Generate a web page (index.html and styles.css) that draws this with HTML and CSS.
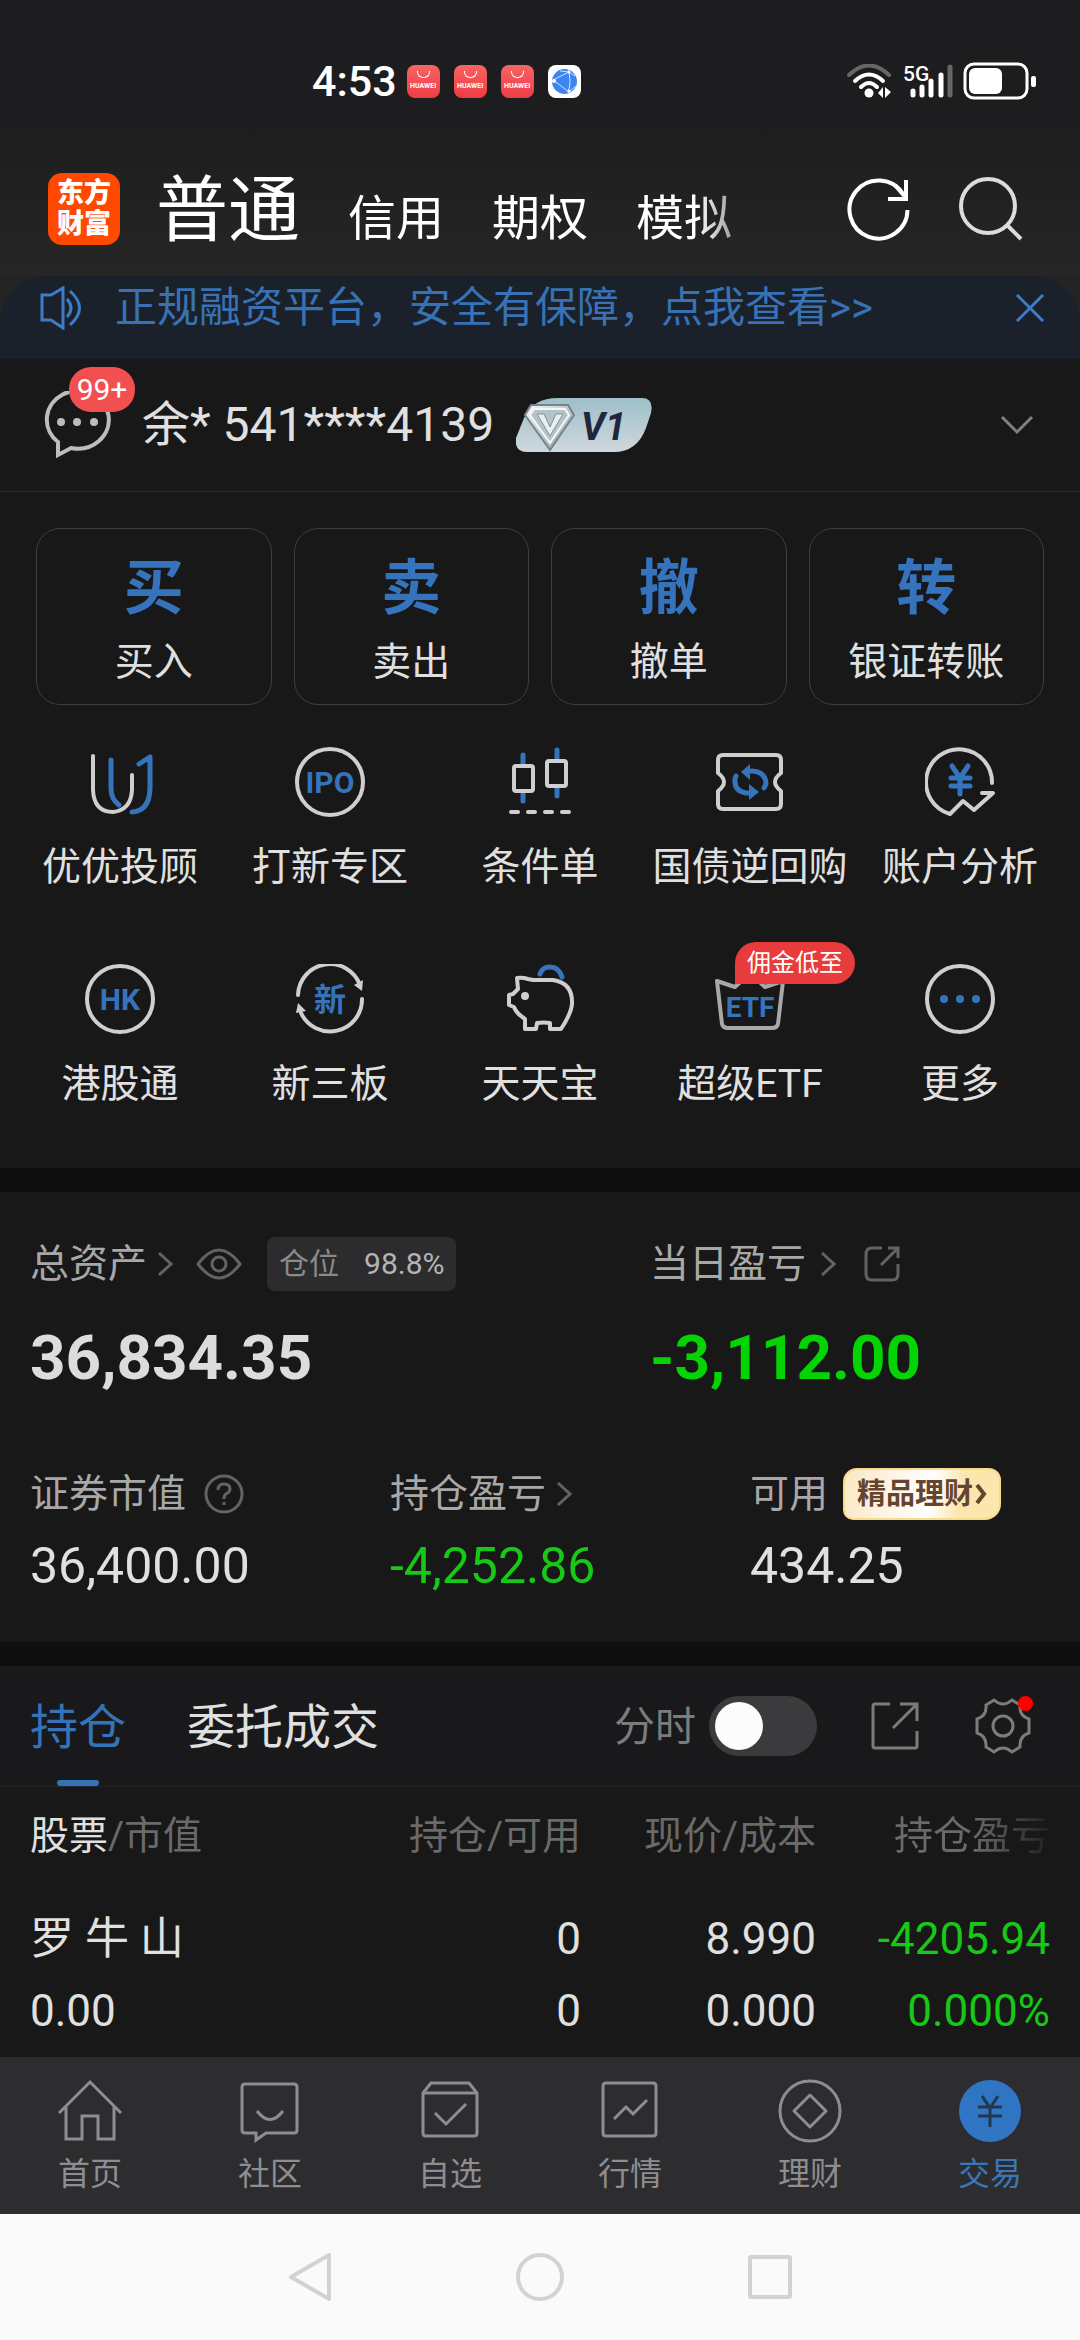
FILE: index.html
```html
<!DOCTYPE html>
<html lang="zh-CN">
<head>
  <meta charset="UTF-8" />
  <meta name="viewport" content="width=device-width, initial-scale=1.0" />
  <title>交易</title>
  <link rel="stylesheet" href="styles.css">
</head>
<body>
  <div class="top">
    <div class="status">
      <span class="time">4:53</span>
      <span class="app">HUAWEI</span>
      <span class="app">HUAWEI</span>
      <span class="app">HUAWEI</span>
      <svg class="globe" viewBox="0 0 33 33">
        <rect width="33" height="33" rx="8" fill="#fff"/>
        <circle cx="16.500" cy="16.500" r="12.500" fill="#3d86f0"/>
        <path d="M5 15 L21 7 M5 15 L21 27 M20 4 Q24 16 20 28 M12 6 L21 7 L27 11 M21 27 L28 21" fill="none" stroke="#cfe3ff" stroke-width="1"/>
        <circle cx="6" cy="16" r="2" fill="#fff"/><circle cx="21" cy="7" r="1.500" fill="#fff"/><circle cx="21" cy="26" r="1.500" fill="#fff"/>
      </svg>
      <div class="signals">
        <svg class="wifi" viewBox="0 0 46 34">
          <path d="M2 11 Q22 -8 42 11" fill="none" stroke="#666" stroke-width="4" stroke-linecap="round"/>
          <path d="M8 17 Q22 4 36 17 M14 23 Q22 15 30 23" fill="none" stroke="#fff" stroke-width="4" stroke-linecap="round"/>
          <circle cx="22" cy="29" r="4.500" fill="#fff"/>
          <path d="M31 29 L36 23 V34 Z M38 23 V34 L44 28 Z" fill="#fff"/>
        </svg>
        <svg class="cell" viewBox="0 0 50 36">
          <text x="0" y="18" class="cell-text">5G</text>
          <g stroke="#fff" stroke-width="5" stroke-linecap="round">
            <path d="M10 28 V32 M19 24 V32 M28 18 V32 M38 12 V32"/>
            <path d="M47 4 V32" stroke="#666"/>
          </g>
        </svg>
        <svg class="battery" viewBox="0 0 74 38">
          <rect x="2" y="2" width="62" height="34" rx="9" fill="none" stroke="#fff" stroke-width="3"/>
          <rect x="6" y="6" width="33" height="26" rx="6" fill="#fff"/>
          <rect x="68" y="14" width="5" height="11" rx="2" fill="#fff"/>
        </svg>
      </div>
    </div>

    <header class="header">
      <div class="logo">东方<br>财富</div>
      <nav class="modes">
        <a href="#" class="mode active">普通</a>
        <a href="#" class="mode">信用</a>
        <a href="#" class="mode">期权</a>
        <a href="#" class="mode">模拟</a>
      </nav>
      <button class="icon-btn" aria-label="刷新">
        <svg width="64" height="64" viewBox="0 0 64 64" fill="none" stroke="#fff" stroke-width="4">
          <path d="M60.500 33 A29 29 0 1 1 56 17"/>
          <path d="M59 3 V22 H41"/>
          <path d="M48 8 L59 21"/>
        </svg>
      </button>
      <button class="icon-btn" aria-label="搜索">
        <svg width="64" height="64" viewBox="0 0 64 64" fill="none" stroke="#dcdcdc" stroke-width="4">
          <circle cx="29" cy="29" r="27"/>
          <path d="M48 48 L62 62"/>
        </svg>
      </button>
    </header>
  </div>

  <div class="notice-wrap">
    <div class="notice">
      <svg width="42" height="44" viewBox="0 0 42 44" fill="none" stroke="#3c7cc8" stroke-width="3">
        <path d="M2 9 H11 L23 2 V42 L11 34 H2 Z"/>
        <path d="M27 13 Q35 22 27 31"/>
        <path d="M30 5 Q49 22 30 39"/>
      </svg>
      <a href="#" class="notice-text">正规融资平台，安全有保障，点我查看&gt;&gt;</a>
      <button class="icon-btn" aria-label="关闭">
        <svg width="30" height="30" viewBox="0 0 30 30" stroke="#3c7cc8" stroke-width="3"><path d="M2 2 L28 28 M28 2 L2 28"/></svg>
      </button>
    </div>
  </div>

  <div class="account">
    <button class="icon-btn message" aria-label="消息">
      <svg width="68" height="68" viewBox="0 0 68 68" fill="none" stroke="#bdbdbd" stroke-width="4">
        <path d="M14 64 V51 A31 29 0 1 1 27 57 Z"/>
        <g fill="#bdbdbd" stroke="none"><circle cx="17" cy="31" r="4"/><circle cx="33" cy="31" r="4"/><circle cx="50" cy="31" r="4"/></g>
      </svg>
      <span class="count">99+</span>
    </button>
    <span class="name">余* 541****4139</span>
    <svg class="vip" width="136" height="54" viewBox="0 0 136 54">
      <defs>
        <linearGradient id="vipBg" x1="0" y1="0" x2="0" y2="1"><stop offset="0" stop-color="#9dbfc8"/><stop offset="1" stop-color="#cfd8dc"/></linearGradient>
        <linearGradient id="gem" x1="0" y1="0" x2="1" y2="1"><stop offset="0" stop-color="#f6fafb"/><stop offset="1" stop-color="#84969c"/></linearGradient>
      </defs>
      <path d="M42 0 H126 Q138 0 135 15 L130 30 Q121 54 98 54 H12 Q-2 54 0 40 L8 20 Q17 0 42 0 Z" fill="url(#vipBg)"/>
      <path d="M15 7 H52 L58 17 L34 52 L9 17 Z" fill="url(#gem)" stroke="#74868c" stroke-width="2"/>
      <path d="M18 11 H49 L53 17 L34 45 L14 17 Z" fill="#b4c3c7" stroke="#f4f8f9" stroke-width="2"/>
      <path d="M21 16 H28 L34 29 L40 16 H47 L34 38 Z" fill="#e8f0f2" stroke="#819197" stroke-width="1"/>
      <text x="65" y="42" class="vip-text">V1</text>
    </svg>
    <button class="icon-btn expand" aria-label="展开">
      <svg width="34" height="20" viewBox="0 0 34 20" fill="none" stroke="#808080" stroke-width="3"><path d="M2 2 L17 17 L32 2"/></svg>
    </button>
  </div>

  <div class="quick">
    <button class="quick-btn"><b>买</b><span>买入</span></button>
    <button class="quick-btn"><b>卖</b><span>卖出</span></button>
    <button class="quick-btn"><b>撤</b><span>撤单</span></button>
    <button class="quick-btn"><b>转</b><span>银证转账</span></button>
  </div>

  <div class="menu">
    <a href="#" class="menu-item">
      <svg class="menu-icon" viewBox="0 0 70 70">
        <path class="b" d="M26 13 V42 Q26 52 34 58"/>
        <path class="b" d="M54 17 L65 10 V40 Q65 64 47 65"/>
        <path class="w" d="M8 9 V43 Q9 65 28 65 Q46 63 47 43 V28"/>
      </svg>
      <span>优优投顾</span>
    </a>
    <a href="#" class="menu-item">
      <svg class="menu-icon" viewBox="0 0 70 70">
        <circle class="w" cx="35" cy="35" r="33"/>
        <text x="35" y="46" class="icon-text" font-size="30">IPO</text>
      </svg>
      <span>打新专区</span>
    </a>
    <a href="#" class="menu-item">
      <svg class="menu-icon" viewBox="0 0 70 70">
        <path class="b" d="M18 8 V17 M18 46 V54 M52 3 V12 M52 40 V49"/>
        <rect class="w" x="9" y="19" width="19" height="25" rx="2"/>
        <rect class="w" x="42" y="14" width="19" height="25" rx="2"/>
        <path class="w" d="M6 65 H13 M23 65 H30 M40 65 H47 M57 65 H64"/>
      </svg>
      <span>条件单</span>
    </a>
    <a href="#" class="menu-item">
      <svg class="menu-icon" viewBox="0 0 70 70">
        <path class="w" d="M8 8 H61 Q66 8 66 13 V26 Q54 35 66 44 V57 Q66 62 61 62 H8 Q3 62 3 57 V44 Q15 35 3 26 V13 Q3 8 8 8 Z"/>
        <path class="b" d="M34 24 H37 Q51 25 51 37 L49 41 M35 46 H31 Q19 44 20 32 L21 29"/>
        <path d="M26 25 L35 17 V33 Z M44 45 L34 37 V53 Z" fill="#3573bd"/>
      </svg>
      <span>国债逆回购</span>
    </a>
    <a href="#" class="menu-item">
      <svg class="menu-icon" viewBox="0 0 70 70">
        <path class="w" d="M67 36 A33 33 0 1 0 25 67 L38 54 L49 63 L68 46 H57"/>
        <path class="b" d="M27 19 L35 31 L43 19 M35 31 V47 M26 31 H45 M26 39 H45"/>
      </svg>
      <span>账户分析</span>
    </a>
    <a href="#" class="menu-item">
      <svg class="menu-icon" viewBox="0 0 70 70">
        <circle class="w" cx="35" cy="35" r="33"/>
        <text x="35" y="46" class="icon-text" font-size="30">HK</text>
      </svg>
      <span>港股通</span>
    </a>
    <a href="#" class="menu-item">
      <svg class="menu-icon" viewBox="0 0 70 70">
        <path class="w" d="M3 31 A32 32 0 0 1 65 21 M67 35 A32 32 0 0 1 6 49"/>
        <path d="M59 21 L68 16 L67 27 Z M1 49 L3 39 L11 47 Z" fill="#cfcfcf"/>
        <text x="35" y="47" class="icon-text" font-size="32">新</text>
      </svg>
      <span>新三板</span>
    </a>
    <a href="#" class="menu-item">
      <svg class="menu-icon" viewBox="0 0 70 70">
        <path class="b" d="M35 10 Q37 3 45 3 Q54 3 57 13"/>
        <path class="w" d="M13 25 L12 14 Q17 13 23 15 L28 16 H48 Q68 19 67 40 Q66 50 56 65 H45 V59 Q39 58 32 59 L31 65 H20 V55 Q11 49 9 43 L4 41 V31 L8 30 Z"/>
        <circle cx="20" cy="32" r="4" fill="#cfcfcf"/>
      </svg>
      <span>天天宝</span>
    </a>
    <a href="#" class="menu-item">
      <svg class="menu-icon" viewBox="0 0 70 70">
        <path class="w dim" d="M2 17 L20 23 L35 9 L50 23 L68 17 L63 60 Q62 64 57 64 H13 Q8 64 7 60 Z"/>
        <text x="35" y="53" class="icon-text" font-size="28">ETF</text>
      </svg>
      <span>超级ETF</span>
      <em class="promo">佣金低至</em>
    </a>
    <a href="#" class="menu-item">
      <svg class="menu-icon" viewBox="0 0 70 70">
        <circle class="w" cx="35" cy="35" r="33"/>
        <g fill="#3573bd"><circle cx="19" cy="35" r="4"/><circle cx="35" cy="35" r="4"/><circle cx="51" cy="35" r="4"/></g>
      </svg>
      <span>更多</span>
    </a>
  </div>

  <section class="assets">
    <div class="totals">
      <div class="cell-box">
        <div class="label">总资产
          <svg class="arrow" viewBox="0 0 16 26"><path d="M2 2 L14 13 L2 24"/></svg>
          <svg class="eye" viewBox="0 0 46 32"><path d="M2 16 Q23 -12 44 16 Q23 44 2 16 Z"/><circle cx="23" cy="16" r="7"/></svg>
          <span class="ratio">仓位<b>98.8%</b></span>
        </div>
        <div class="big">36,834.35</div>
      </div>
      <div class="cell-box">
        <div class="label">当日盈亏
          <svg class="arrow wide" viewBox="0 0 16 26"><path d="M2 2 L14 13 L2 24"/></svg>
          <svg class="share" viewBox="0 0 36 36"><path d="M18 2 H8 Q2 2 2 8 V28 Q2 34 8 34 H28 Q34 34 34 28 V18 M24 2 H34 V12 M34 2 L17 19"/></svg>
        </div>
        <div class="big green">-3,112.00</div>
      </div>
    </div>
    <div class="details">
      <div class="cell-box">
        <div class="label">证券市值
          <svg class="help" viewBox="0 0 40 40"><circle cx="20" cy="20" r="18"/><path d="M14 16 Q14 10 20 10 Q26 10 26 15 Q26 18 22 20 Q20 21 20 25 M20 28 V31"/></svg>
        </div>
        <div class="value">36,400.00</div>
      </div>
      <div class="cell-box">
        <div class="label">持仓盈亏
          <svg class="arrow" viewBox="0 0 16 26"><path d="M2 2 L14 13 L2 24"/></svg>
        </div>
        <div class="value green">-4,252.86</div>
      </div>
      <div class="cell-box">
        <div class="label">可用
          <a href="#" class="finance">精品理财<svg width="12" height="22" viewBox="0 0 12 22" fill="none" stroke="#66452f" stroke-width="4"><path d="M2 2 L9 11 L2 20"/></svg></a>
        </div>
        <div class="value">434.25</div>
      </div>
    </div>
  </section>

  <section class="holdings">
    <div class="tabs">
      <button class="tab active">持仓</button>
      <button class="tab">委托成交</button>
      <label class="minute" for="minute">分时</label>
      <input type="checkbox" class="switch" id="minute" />
      <button class="icon-btn" aria-label="分享">
        <svg width="48" height="48" viewBox="0 0 48 48" fill="none" stroke="#7c7c7c" stroke-width="3">
          <path d="M19 2 H4 Q2 2 2 4 V44 Q2 46 4 46 H44 Q46 46 46 44 V29 M29 2 H46 V19 M45 3 L22 26"/>
        </svg>
      </button>
      <button class="icon-btn gear" aria-label="设置">
        <svg width="56" height="56" viewBox="0 0 56 56" fill="none" stroke="#7c7c7c" stroke-width="3">
          <path d="M19 2 Q28 10 37 2 L45 7 Q44 18 54 21 V35 Q44 38 45 49 L37 54 Q28 46 19 54 L11 49 Q12 38 2 35 V21 Q12 18 11 7 Z"/>
          <circle cx="28" cy="28" r="10"/>
        </svg>
        <i class="dot"></i>
      </button>
    </div>
    <table class="stocks">
      <colgroup><col><col class="col-num"><col class="col-num"><col class="col-last"></colgroup>
      <thead>
        <tr>
          <th><span class="on">股票</span>/市值</th>
          <th>持仓/可用</th>
          <th>现价/成本</th>
          <th class="fade">持仓盈亏</th>
        </tr>
      </thead>
      <tbody>
        <tr>
          <td>罗 牛 山<br>0.00</td>
          <td>0<br>0</td>
          <td>8.990<br>0.000</td>
          <td class="green">-4205.94<br>0.000%</td>
        </tr>
      </tbody>
    </table>
  </section>

  <nav class="bottom">
    <a href="#" class="bottom-item">
      <svg viewBox="0 0 64 64"><path d="M1 34 L32 3 L63 34 M8 28 V60 H24 V37 H40 V60 H56 V28"/></svg>
      首页
    </a>
    <a href="#" class="bottom-item">
      <svg viewBox="0 0 64 64"><path d="M7 5 H56 Q59 5 59 8 V51 Q59 54 56 54 H28 L18 61 V54 H7 Q4 54 4 51 V8 Q4 5 7 5 Z M19 32 Q32 49 45 32"/></svg>
      社区
    </a>
    <a href="#" class="bottom-item">
      <svg viewBox="0 0 64 64"><path d="M5 14 L13 4 H51 L59 14 V54 Q59 57 56 57 H8 Q5 57 5 54 Z M5 14 H59 M17 34 L28 45 L48 25"/></svg>
      自选
    </a>
    <a href="#" class="bottom-item">
      <svg viewBox="0 0 64 64"><path d="M8 4 H55 Q58 4 58 7 V54 Q58 57 55 57 H8 Q5 57 5 54 V7 Q5 4 8 4 Z M16 40 L28 28 L35 35 L49 21"/></svg>
      行情
    </a>
    <a href="#" class="bottom-item">
      <svg viewBox="0 0 64 64"><circle cx="32" cy="32" r="30"/><path d="M32 16 L48 32 L32 48 L16 32 Z" stroke-linejoin="round"/></svg>
      理财
    </a>
    <a href="#" class="bottom-item active">
      <svg viewBox="0 0 64 64"><circle cx="32" cy="32" r="31" fill="#3074c4" stroke="none"/><path d="M24 17 L32 29 L40 17 M32 29 V48 M20 28 H44 M20 37 H44" stroke="#22364e"/></svg>
      交易
    </a>
  </nav>

  <div class="system">
    <button class="icon-btn" aria-label="返回"><svg width="48" height="50" viewBox="0 0 48 50"><path d="M43 3 V47 L5 25 Z"/></svg></button>
    <button class="icon-btn" aria-label="主屏幕"><svg width="50" height="50" viewBox="0 0 50 50"><circle cx="25" cy="25" r="22"/></svg></button>
    <button class="icon-btn" aria-label="最近任务"><svg width="48" height="50" viewBox="0 0 48 50"><rect x="4" y="5" width="40" height="40" rx="1"/></svg></button>
  </div>
</body>
</html>
```
FILE: styles.css
```css
* {
  box-sizing: border-box;
}
body {
  margin: 0;
  background: #181818;
  color: #e0e0e0;
  font-family: Roboto, "Noto Sans CJK SC", sans-serif;
  font-size: 39px;
}
a {
  color: inherit;
  text-decoration: none;
}
button {
  margin: 0;
  padding: 0;
  border: none;
  background: none;
  color: inherit;
  font: inherit;
  cursor: pointer;
}
svg {
  display: block;
  flex: none;
}
.icon-btn {
  position: relative;
  flex: none;
}
.green {
  color: #17c817;
}

/* status bar + header */
.top {
  background: linear-gradient(#1d1d1f 45%, #262626);
}
.status {
  display: flex;
  align-items: center;
  gap: 14px;
  height: 162px;
  padding: 0 43px 0 312px;
}
.time {
  color: #fff;
  font-size: 43px;
  font-weight: 500;
  line-height: 46px;
  margin-right: -4px;
}
.app {
  display: flex;
  flex-direction: column;
  align-items: center;
  gap: 5px;
  width: 33px;
  height: 33px;
  padding-top: 6px;
  border-radius: 8px;
  background: linear-gradient(#f86464, #ee3c44);
  color: #fff;
  font-size: 7px;
  font-weight: bold;
  line-height: 7px;
}
.app::before {
  content: "";
  width: 11px;
  height: 6px;
  border: 1px solid #fff;
  border-top: none;
  border-radius: 0 0 6px 6px;
}
.globe {
  width: 33px;
  height: 33px;
}
.signals {
  display: flex;
  align-items: center;
  gap: 10px;
  margin-left: auto;
}
.wifi {
  width: 46px;
  height: 34px;
}
.cell {
  width: 50px;
  height: 36px;
}
.cell-text {
  fill: #fff;
  font-size: 21px;
  font-weight: 500;
}
.battery {
  width: 74px;
  height: 38px;
}
.header {
  display: flex;
  align-items: center;
  height: 114px;
  padding: 0 57px 20px 48px;
  gap: 48px;
}
.logo {
  display: flex;
  align-items: center;
  justify-content: center;
  width: 72px;
  height: 72px;
  border-radius: 14px;
  background: #ff4800;
  color: #fff;
  font-size: 27px;
  font-weight: 900;
  line-height: 31px;
}
.modes {
  display: flex;
  flex: 1;
  align-items: baseline;
  gap: 48px;
  margin-left: -12px;
  padding-top: 12px;
  color: #fff;
  font-size: 48px;
  line-height: 72px;
  white-space: nowrap;
  -webkit-mask-image: linear-gradient(to right, #000 84%, transparent 97%);
  mask-image: linear-gradient(to right, #000 84%, transparent 97%);
}
.mode.active {
  font-size: 72px;
}

/* notice */
.notice-wrap {
  background: #242424;
}
.notice {
  display: flex;
  align-items: center;
  height: 83px;
  padding: 0 35px 20px 40px;
  border-radius: 48px 48px 0 0;
  background: #1b212a;
}
.notice-text {
  flex: 1;
  margin-left: 33px;
  color: #3872b5;
  font-size: 42px;
  line-height: 50px;
}

/* account */
.account {
  display: flex;
  align-items: center;
  height: 133px;
  padding: 0 46px 0 44px;
  border-bottom: 1px solid #2c2c2c;
}
.message {
  margin-right: 30px;
}
.count {
  position: absolute;
  top: -24px;
  left: 25px;
  width: 66px;
  height: 45px;
  border-radius: 22px;
  background: #f24f50;
  color: #fff;
  font-size: 30px;
  line-height: 45px;
}
.name {
  font-size: 48px;
  line-height: 56px;
}
.vip {
  margin-left: 22px;
}
.vip-text {
  fill: #22263c;
  font-size: 38px;
  font-style: italic;
  font-weight: bold;
}
.expand {
  margin-left: auto;
}

/* buy / sell buttons */
.quick {
  display: grid;
  grid-template-columns: repeat(4, 1fr);
  gap: 22px;
  padding: 36px 36px 0;
}
.quick-btn {
  display: flex;
  flex-direction: column;
  align-items: center;
  gap: 22px;
  padding: 30px 0 21px;
  border: 1px solid #3e3e3e;
  border-radius: 24px;
}
.quick-btn b {
  color: #3573bd;
  font-size: 60px;
  font-weight: bold;
  line-height: 60px;
}
.quick-btn span {
  line-height: 42px;
}

/* menu */
.menu {
  display: grid;
  grid-template-columns: repeat(5, 1fr);
  row-gap: 75px;
  padding: 42px 15px 62px;
}
.menu-item {
  position: relative;
  display: flex;
  flex-direction: column;
  align-items: center;
  gap: 28px;
  line-height: 44px;
  white-space: nowrap;
}
.menu-icon {
  width: 70px;
  height: 70px;
  fill: none;
  stroke-linecap: round;
  stroke-linejoin: round;
}
.w {
  stroke: #cfcfcf;
  stroke-width: 4;
}
.w.dim {
  stroke: #a8a8a8;
}
.b {
  stroke: #3573bd;
  stroke-width: 5;
}
.icon-text {
  fill: #3573bd;
  font-weight: bold;
  text-anchor: middle;
}
.promo {
  position: absolute;
  top: -22px;
  left: 90px;
  height: 42px;
  padding: 0 12px;
  border-radius: 21px 21px 21px 0;
  background: #e83c3c;
  color: #fff;
  font-size: 24px;
  font-style: normal;
  line-height: 42px;
}

/* assets */
.assets {
  padding: 45px 0 51px;
  border-top: 24px solid #0e0e0e;
  border-bottom: 24px solid #0e0e0e;
}
.totals {
  display: grid;
  grid-template-columns: 62fr 46fr;
}
.details {
  display: grid;
  grid-template-columns: repeat(3, 1fr);
  margin-top: 80px;
}
.cell-box {
  padding-left: 30px;
}
.label {
  display: flex;
  align-items: center;
  height: 54px;
  color: #a8a8a8;
  line-height: 52px;
}
.details .label {
  height: 52px;
}
.label svg {
  fill: none;
  stroke: #636363;
  stroke-width: 3;
}
.label .arrow {
  width: 16px;
  height: 26px;
  margin-left: 10px;
}
.label .arrow.wide {
  margin-left: 14px;
}
.eye {
  width: 46px;
  height: 32px;
  margin-left: 23px;
}
.share {
  width: 36px;
  height: 36px;
  margin-left: 28px;
}
.help {
  width: 40px;
  height: 40px;
  margin-left: 18px;
}
.ratio {
  display: flex;
  gap: 25px;
  margin-left: 25px;
  padding: 0 12px;
  border-radius: 8px;
  background: #2c2c2e;
  color: #8a8a8a;
  font-size: 30px;
  line-height: 54px;
}
.ratio b {
  color: #b4b4b4;
  font-weight: normal;
}
.big {
  margin-top: 37px;
  color: #dcdcdc;
  font-size: 62px;
  font-weight: bold;
  line-height: 60px;
}
.big.green {
  color: #04d404;
}
.value {
  margin-top: 21px;
  font-size: 50px;
  line-height: 50px;
}
.label .finance {
  display: flex;
  align-items: center;
  gap: 2px;
  height: 52px;
  margin-left: 15px;
  padding: 0 12px;
  border: 2px solid #f6dc8c;
  border-radius: 14px 12px 16px 10px;
  background: linear-gradient(100deg, #fbe8c4, #fff 55%, #fbe6ae 75%);
  color: #66452f;
  font-size: 29px;
  font-weight: bold;
}
.label .finance svg {
  stroke: #66452f;
  stroke-width: 4;
}

/* holdings */
.tabs {
  display: flex;
  align-items: center;
  height: 121px;
  padding: 0 49px 0 30px;
  border-bottom: 1px solid #262626;
  background: #19191b;
}
.tab {
  position: relative;
  height: 120px;
  margin-right: 61px;
  padding-top: 4px;
  font-size: 48px;
  line-height: 116px;
}
.tab.active {
  color: #3573b9;
}
.tab.active::after {
  content: "";
  position: absolute;
  bottom: 0;
  left: 50%;
  width: 42px;
  height: 6px;
  margin-left: -21px;
  border-radius: 3px;
  background: #3573b9;
}
.minute {
  margin-left: auto;
  padding-top: 2px;
  color: #7c7c7c;
  font-size: 41px;
  line-height: 60px;
}
.switch {
  appearance: none;
  width: 108px;
  height: 60px;
  margin: 0 54px 0 13px;
  padding: 6px;
  border-radius: 30px;
  background: #3b3b3d;
}
.switch::before {
  content: "";
  display: block;
  width: 48px;
  height: 48px;
  border-radius: 50%;
  background: #fcfcfc;
}
.switch:checked::before {
  margin-left: auto;
}
.gear {
  margin-left: 56px;
}
.dot {
  position: absolute;
  top: -2px;
  right: -2px;
  width: 15px;
  height: 15px;
  border-radius: 50%;
  background: #ff0000;
}
.stocks {
  width: 100%;
  table-layout: fixed;
  border-collapse: collapse;
}
.col-num {
  width: 235px;
}
.col-last {
  width: 264px;
}
.stocks th {
  padding: 23px 0 21px;
  color: #6a6a6a;
  font-weight: normal;
  line-height: 52px;
  text-align: right;
}
.stocks td {
  padding: 20px 0 10px;
  font-size: 44px;
  line-height: 72px;
  text-align: right;
}
.stocks th:first-child,
.stocks td:first-child {
  padding-left: 30px;
  text-align: left;
}
.stocks th:last-child,
.stocks td:last-child {
  padding-right: 30px;
}
.on {
  color: #e0e0e0;
}
.stocks .fade {
  background: linear-gradient(to right, #6a6a6a 60%, #181818 92%);
  -webkit-background-clip: text;
  background-clip: text;
  color: transparent;
}

/* bottom navigation */
.bottom {
  display: grid;
  grid-template-columns: repeat(6, 1fr);
  padding: 22px 0;
  background: #2d2d2f;
}
.bottom-item {
  display: flex;
  flex-direction: column;
  align-items: center;
  gap: 13px;
  color: #8e8e92;
  font-size: 32px;
  line-height: 36px;
}
.bottom-item svg {
  width: 64px;
  height: 64px;
  fill: none;
  stroke: #8e8e92;
  stroke-width: 3;
}
.bottom-item.active {
  color: #3b76b8;
}
.system {
  display: flex;
  align-items: center;
  justify-content: center;
  gap: 181px;
  height: 126px;
  background: #fafafa;
}
.system svg {
  fill: none;
  stroke: #d2d2d2;
  stroke-width: 4;
  stroke-linejoin: round;
}
```
